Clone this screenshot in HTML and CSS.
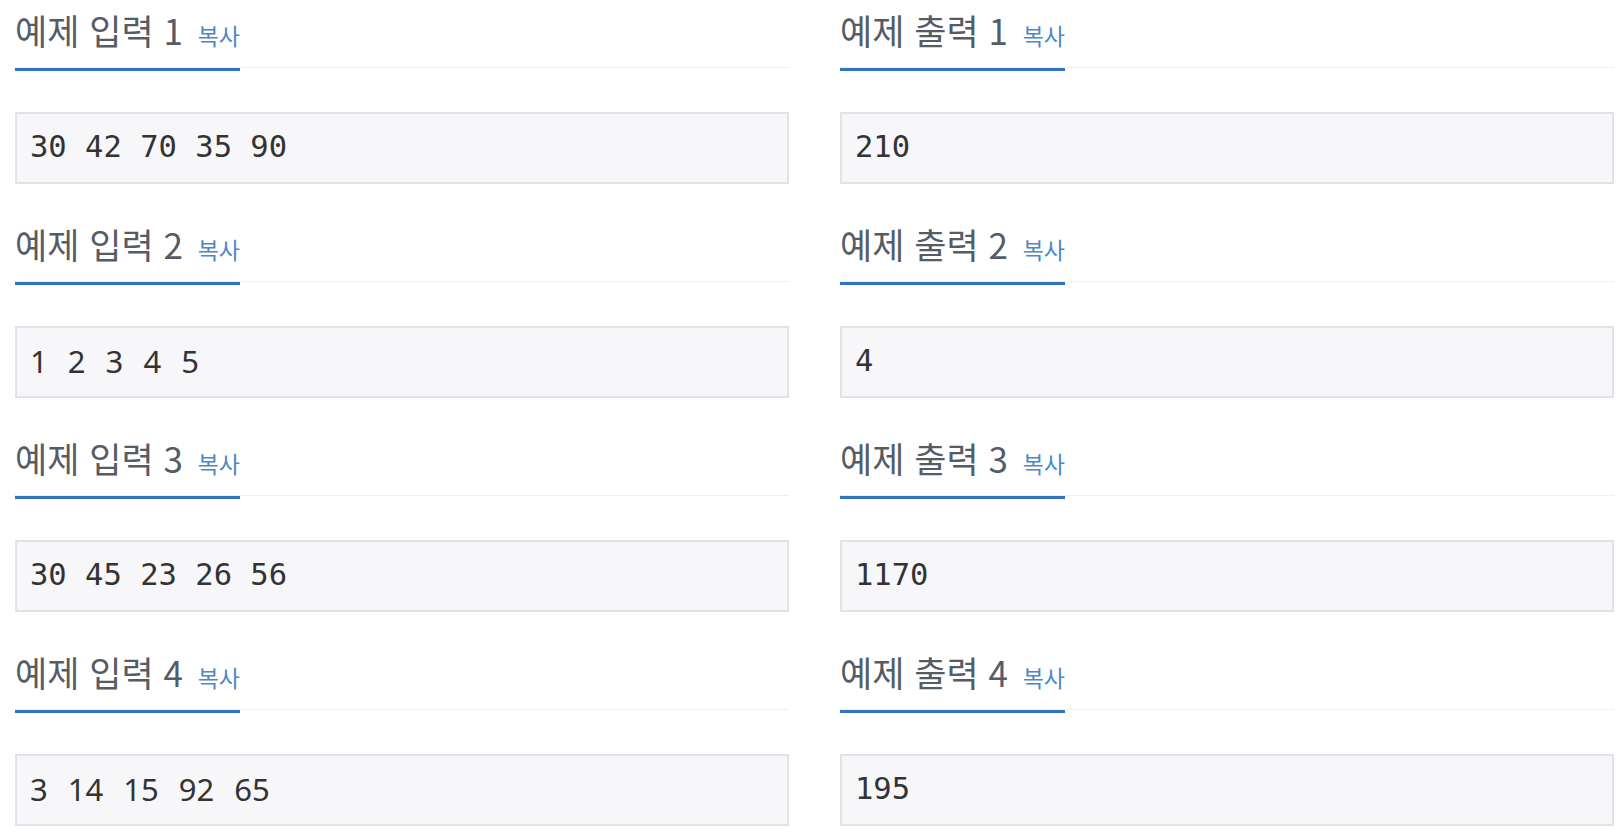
FILE: index.html
```html
<!DOCTYPE html>
<html lang="ko">
<head>
<meta charset="utf-8">
<title>예제</title>
<link rel="stylesheet" href="styles.css">
</head>
<body>
<div class="samples">
  <section class="sample">
    <div class="headline"><h2>예제 입력 1 <span class="copy">복사</span></h2></div>
    <pre class="data">30 42 70 35 90</pre>
  </section>
  <section class="sample">
    <div class="headline"><h2>예제 출력 1 <span class="copy">복사</span></h2></div>
    <pre class="data">210</pre>
  </section>
  <section class="sample">
    <div class="headline"><h2>예제 입력 2 <span class="copy">복사</span></h2></div>
    <pre class="data sans">1 2 3 4 5</pre>
  </section>
  <section class="sample">
    <div class="headline"><h2>예제 출력 2 <span class="copy">복사</span></h2></div>
    <pre class="data">4</pre>
  </section>
  <section class="sample">
    <div class="headline"><h2>예제 입력 3 <span class="copy">복사</span></h2></div>
    <pre class="data">30 45 23 26 56</pre>
  </section>
  <section class="sample">
    <div class="headline"><h2>예제 출력 3 <span class="copy">복사</span></h2></div>
    <pre class="data">1170</pre>
  </section>
  <section class="sample">
    <div class="headline"><h2>예제 입력 4 <span class="copy">복사</span></h2></div>
    <pre class="data sans">3 14 15 92 65</pre>
  </section>
  <section class="sample">
    <div class="headline"><h2>예제 출력 4 <span class="copy">복사</span></h2></div>
    <pre class="data">195</pre>
  </section>
</div>
</body>
</html>
```

FILE: styles.css
```css
html, body {
  margin: 0;
  padding: 0;
  background: #ffffff;
}

body {
  font-family: "Noto Sans CJK KR", "Noto Sans", sans-serif;
  color: #333333;
}

.samples {
  display: grid;
  grid-template-columns: 774px 774px;
  column-gap: 51px;
  row-gap: 40px;
  padding: 10px 0 0 15px;
}

.sample {
  display: flex;
  flex-direction: column;
}

.headline {
  display: flex;
  align-items: flex-end;
  border-bottom: 1px dotted #dde1e8;
}

.headline h2 {
  margin: 0 0 -4px 0;
  padding: 0 0 18px 0;
  font-size: 35px;
  line-height: 40px;
  font-weight: 400;
  color: #555c66;
  border-bottom: 3px solid #3174c0;
  white-space: nowrap;
}

.copy {
  font-size: 23px;
  line-height: 1;
  color: #4a88c9;
  margin-left: 5px;
}

.data {
  margin: 44px 0 0 0;
  padding: 12px 13px 14px 13px;
  height: 42px;
  font-family: "DejaVu Sans Mono", monospace;
  font-size: 30.5px;
  line-height: 42px;
  color: #333333;
  background: #f7f7f9;
  border: 2px solid #e1e1e8;
  white-space: pre;
  overflow: hidden;
}

.data.sans {
  font-family: "Noto Sans", sans-serif;
  font-size: 31px;
  word-spacing: 12px;
}
```
